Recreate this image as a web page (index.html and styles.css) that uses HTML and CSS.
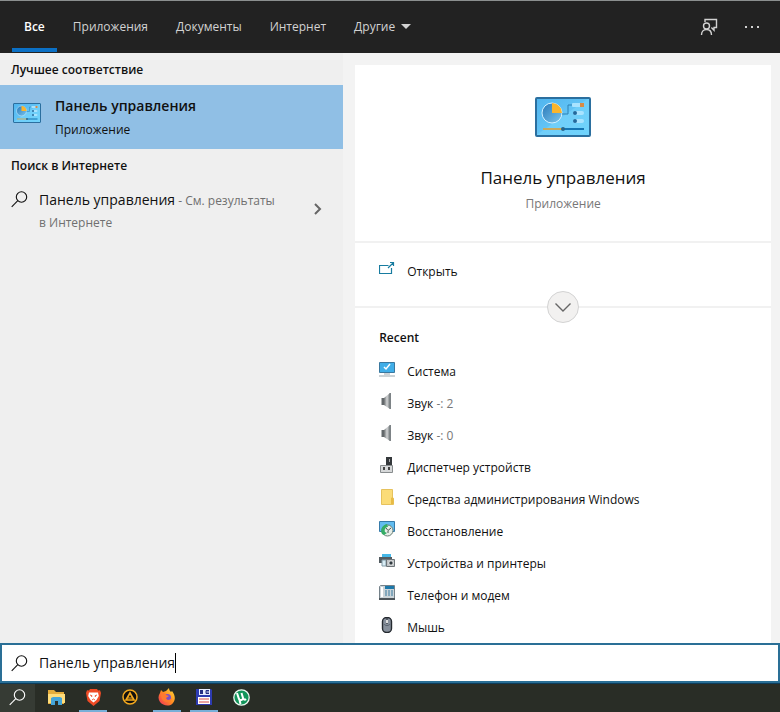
FILE: index.html
```html
<!DOCTYPE html>
<html lang="ru">
<head>
<meta charset="utf-8">
<meta name="viewport" content="width=device-width, initial-scale=1">
<title>Поиск</title>
<link rel="stylesheet" href="styles.css">
</head>
<body>
<svg class="defs" aria-hidden="true">
  <defs>
    <linearGradient id="panel-blue" x1="0" y1="0" x2="1" y2="1">
      <stop offset="0" stop-color="#4fb4ee"/><stop offset=".48" stop-color="#62c3f5"/><stop offset=".5" stop-color="#70cef9"/><stop offset="1" stop-color="#6fd3fc"/>
    </linearGradient>
    <linearGradient id="pie-blue" x1="0" y1="0" x2="1" y2="1">
      <stop offset="0" stop-color="#2878b8"/><stop offset="1" stop-color="#7cc6ee"/>
    </linearGradient>
    <linearGradient id="metal" x1="0" x2="1">
      <stop offset="0" stop-color="#6a6e70"/><stop offset=".5" stop-color="#d4d6d7"/><stop offset="1" stop-color="#73787b"/>
    </linearGradient>
    <linearGradient id="fire" x1="1" y1="0" x2="0" y2="1">
      <stop offset="0" stop-color="#ffe13b"/><stop offset=".5" stop-color="#ff8a20"/><stop offset="1" stop-color="#f22b62"/>
    </linearGradient>
    <symbol id="control-panel" viewBox="0 0 56 40">
      <rect x="1" y="1" width="54" height="38" rx="1" fill="url(#panel-blue)" stroke="#2b6f9f" stroke-width="2"/>
      <circle cx="17" cy="16" r="10" fill="url(#pie-blue)" stroke="#d4f1ff"/>
      <path d="M17 16V6a10 10 0 0 1 10 10z" fill="#fbb52c"/>
      <path d="M27 17h6V8h4" fill="none" stroke="#2d81b5"/>
      <rect x="37" y="6" width="12" height="4" rx="1" fill="#a9e3ff"/><rect x="45" y="6" width="4" height="4" fill="#d98b45"/>
      <rect x="38" y="14" width="11" height="4" rx="2" fill="#a9e3ff"/><circle cx="40" cy="16" r="2" fill="#22689c"/>
      <rect x="38" y="22" width="11" height="4" rx="2" fill="#a9e3ff"/><circle cx="40" cy="24" r="2" fill="#22689c"/>
      <path d="M8 32h20" stroke="#c9a95d" stroke-width="2"/><path d="M29 32h20" stroke="#1475b3" stroke-width="2"/><circle cx="28" cy="32" r="2" fill="#27658c"/>
    </symbol>
    <symbol id="magnifier" viewBox="0 0 17 17">
      <circle cx="10.5" cy="6" r="5.2" fill="none" stroke="currentColor" stroke-width="1.1"/>
      <path d="M6.8 9.7 .7 15.8" stroke="currentColor" stroke-width="1.1"/>
    </symbol>
    <symbol id="speaker" viewBox="0 0 16 16">
      <path d="M2.500 5H6v7H2.500z" fill="#63686b"/><path d="m5 5 6-5v16l-6-4z" fill="url(#metal)"/><path d="M10.500 0H12v16h-1.500z" fill="#7d8386"/>
    </symbol>
  </defs>
</svg>

<header class="topbar">
  <nav class="tabs" aria-label="Категории поиска">
    <button class="tab active">Все</button>
    <button class="tab">Приложения</button>
    <button class="tab">Документы</button>
    <button class="tab">Интернет</button>
    <button class="tab">Другие <svg class="caret-down" viewBox="0 0 10 5" aria-hidden="true"><path d="M0 0h10L5 5z" fill="currentColor"/></svg></button>
  </nav>
  <div class="actions">
    <button class="action" aria-label="Отзыв">
      <svg width="18" height="18" viewBox="0 0 18 18" fill="none" stroke="currentColor" stroke-width="1.4"><path d="M5 4V1.5h11.5v8H14v2.8l-2.6-2.7"/><circle cx="6.5" cy="8" r="3"/><path d="M1.5 17c0-3.7 2-5.5 5-5.5s5 1.800 5 5.500"/></svg>
    </button>
    <button class="action" aria-label="Параметры">
      <svg width="16" height="18" viewBox="0 0 16 18" fill="currentColor"><path d="M1 8h2v2H1zM7 8h2v2H7zM13 8h2v2h-2z"/></svg>
    </button>
  </div>
</header>

<main class="content">
  <section class="results">
    <h2 class="group">Лучшее соответствие</h2>
    <a class="best" href="#panel">
      <svg class="best-icon" aria-hidden="true"><use href="#control-panel"/></svg>
      <span class="best-text"><strong class="best-title">Панель управления</strong><span class="best-kind">Приложение</span></span>
    </a>
    <h2 class="group">Поиск в Интернете</h2>
    <a class="web" href="#web">
      <svg class="lens" aria-hidden="true"><use href="#magnifier"/></svg>
      <span class="web-text"><span class="web-query">Панель управления</span> - См. результаты в Интернете</span>
      <svg class="chevron" viewBox="0 0 8 12" aria-hidden="true"><path d="m1 1 5 5-5 5" fill="none" stroke="currentColor" stroke-width="2"/></svg>
    </a>
  </section>

  <section class="preview" id="panel">
    <div class="card">
      <div class="hero">
        <svg class="hero-icon" aria-hidden="true"><use href="#control-panel"/></svg>
        <h1 class="hero-title">Панель управления</h1>
        <p class="hero-kind">Приложение</p>
      </div>
      <div class="open">
        <a class="row" href="#open">
          <svg class="icon" viewBox="0 0 16 16" fill="none" stroke="#187ca0" stroke-width="1.200" aria-hidden="true"><path d="M9.500 4.500h-9v8h12V7M9 7l5.500-5.500M11 1.500h3.500V5"/></svg>
          <span>Открыть</span>
        </a>
        <button class="expand" aria-label="Развернуть"><svg width="16" height="9" viewBox="0 0 16 9"><path d="m0.500 .500 7.500 7.500 7.500-7.500" fill="none" stroke="#666" stroke-width="1.400"/></svg></button>
      </div>
      <div class="recent">
        <h2 class="recent-title">Recent</h2>
        <ul class="list">
          <li><a class="row" href="#system"><svg class="icon" viewBox="0 0 16 16" aria-hidden="true"><path d="M.5 1.500h15v10H.500z" fill="#40aee8" stroke="#3a789f"/><path d="m5 6 2 2 4-5" fill="none" stroke="#fff" stroke-width="1.500"/><path d="M5 13h6M0 15h16" stroke="#9aa7ae"/></svg><span>Система</span></a></li>
          <li><a class="row" href="#sound2"><svg class="icon" aria-hidden="true"><use href="#speaker"/></svg><span>Звук <span class="muted">-: 2</span></span></a></li>
          <li><a class="row" href="#sound0"><svg class="icon" aria-hidden="true"><use href="#speaker"/></svg><span>Звук <span class="muted">-: 0</span></span></a></li>
          <li><a class="row" href="#devices"><svg class="icon" viewBox="0 0 16 16" aria-hidden="true"><path d="M7 0h6v8H7z" fill="#34383b"/><path d="M10 2h1v3h-1z" fill="#aaa"/><path d="M1.500 8.500h12v7h-12z" fill="#d6d8d9" stroke="#888c8e"/><path d="M4 10h2v3H4zM9 10h2v3H9z" fill="#444"/></svg><span>Диспетчер устройств</span></a></li>
          <li><a class="row" href="#admin"><svg class="icon" viewBox="0 0 16 16" aria-hidden="true"><path d="M2.500.500h11v8l1 1v6h-12z" fill="#fbdc78" stroke="#e6c25d"/><path d="m12 9 1.500-1 1 1v6H12z" fill="#e8bb46"/></svg><span>Средства администрирования Windows</span></a></li>
          <li><a class="row" href="#recovery"><svg class="icon" viewBox="0 0 16 16" aria-hidden="true"><path d="M.500.500h15v10H.500z" fill="#62bdf0" stroke="#367baa"/><circle cx="8.500" cy="9.500" r="5.500" fill="#e6eee8" stroke="#687b73"/><path d="M8 3C3 4 1 9 3 13l2 1 3-2-2-1c-1-3 1-5 3-5z" fill="#35ad66"/><path d="m7 7 2 2.500L12 7M9 10v2" fill="none" stroke="#4c5652"/></svg><span>Восстановление</span></a></li>
          <li><a class="row" href="#printers"><svg class="icon" viewBox="0 0 16 16" aria-hidden="true"><path d="M0 4h13v6H0z" fill="#535c61"/><path d="M3 1h9v3H3z" fill="#45b8e8"/><path d="M3 7h4v6H3z" fill="#d9edf5" stroke="#829aa6"/><path d="M7.500 6.500h8v7h-8z" fill="#bfc3c5" stroke="#6d7478"/><circle cx="12" cy="10" r="2.200" fill="#303a40" stroke="#eee"/></svg><span>Устройства и принтеры</span></a></li>
          <li><a class="row" href="#phone"><svg class="icon" viewBox="0 0 16 16" aria-hidden="true"><path d="M1.500.500h14v13H.500v-12z" fill="#cbd4d9" stroke="#75828a"/><path d="M6 1h9v3H6z" fill="#1c78aa"/><path d="M3 2v10" stroke="#fff" stroke-width="2"/><path d="M6 6h2M9 6h2M12 6h2M6 8h2M9 8h2M12 8h2M6 10h2M9 10h2M12 10h2" stroke="#397b9f"/><path d="M0 13h16v2H0z" fill="#4c545a"/></svg><span>Телефон и модем</span></a></li>
          <li><a class="row" href="#mouse"><svg class="icon" viewBox="0 0 16 16" aria-hidden="true"><rect x="3.500" y=".500" width="9" height="15" rx="4" fill="#87909c" stroke="#252a30" stroke-width="1.400"/><path d="M8 1v6" stroke="#252a30"/><path d="M8 3v3" stroke="#ddd" stroke-width="2"/><path d="M5 7c1 2 5 2 6 0" fill="none" stroke="#57616d"/></svg><span>Мышь</span></a></li>
        </ul>
      </div>
    </div>
  </section>
</main>

<label class="search">
  <svg class="lens" aria-hidden="true"><use href="#magnifier"/></svg>
  <input class="search-input" type="text" value="Панель управления" aria-label="Поиск">
  <span class="text-caret"></span>
</label>

<footer class="taskbar">
  <button class="task current" aria-label="Поиск"><svg width="17" height="17"><use href="#magnifier"/></svg></button>
  <button class="task" aria-label="Проводник"><svg width="17" height="16" viewBox="0 0 17 16"><path d="M0 1h6l2 2h8v12H0z" fill="#e5ad3c"/><path d="M0 5h17v9H0z" fill="#ffdc7a"/><path d="M3 16V9l2-1h7l2 1v7h-4v-4H7v4z" fill="#45a4d8"/><path d="M7 12h3v4H7z" fill="#292d26"/></svg></button>
  <button class="task running" aria-label="Brave"><svg width="15" height="17" viewBox="0 0 15 17"><path d="M4 0h7l1 1.500 2-.300L15 4l-1.500 8L7.500 17l-6-5L0 4l1-2.800 2 .300z" fill="#ef4b26"/><path d="M3 3.500h9l.800 3.500-2.300 4-3 2.500-3-2.500L2.200 7z" fill="#fff"/><path d="m4 6 2 .800-.500 1.200M11 6l-2 .800.500 1.200M6 11l1.500-1L9 11" fill="none" stroke="#ef4b26" stroke-width=".900"/></svg></button>
  <button class="task" aria-label="AIMP"><svg width="16" height="16" viewBox="0 0 16 16"><circle cx="8" cy="8" r="7" fill="#11100e" stroke="#f4a91e" stroke-width="1.500"/><path d="m8 4 4 7H4z" fill="none" stroke="#f4a91e" stroke-width="1.700"/><path d="M6 9h4" stroke="#f4a91e"/></svg></button>
  <button class="task running" aria-label="Firefox"><svg width="18" height="18" viewBox="0 0 18 18"><path d="M2 5 3 2l2 2 3-1 3-3c0 2 1 3 2 4l1-1c3 4 4 8 1 12-3 4-10 3-13-1C0 11 0 8 2 5z" fill="url(#fire)"/><circle cx="9.500" cy="9.500" r="3.500" fill="#7950c8"/><path d="M3 5c3-1 4 0 5 2l3 1-3 2c1 3 4 2 6 0-1 5-8 5-10 1-1-2-1-4-1-6z" fill="#ff7a30"/></svg></button>
  <button class="task running" aria-label="Total Commander"><svg width="16" height="16" viewBox="0 0 16 16"><path d="M0 0h15l1 1v15H0z" fill="#2d3bb0"/><path d="M3 0h11v6H3z" fill="#e8edff"/><path d="M4 1h3v4H4z" fill="#252f83"/><path d="M13 1.500h-3v3h3M10 3h3" fill="none" stroke="#252f83"/><path d="M2 8h12v7H2z" fill="#fff"/><path d="M3 10h10M3 13h10" stroke="#d64b45"/></svg></button>
  <button class="task" aria-label="µTorrent"><svg width="17" height="17" viewBox="0 0 17 17"><circle cx="8.500" cy="8.500" r="7.700" fill="#12945a" stroke="#edf7f1" stroke-width="1.300"/><path d="m4 4 2 6c1 2 4 1 4-1L8.500 4M10 9c1 2 2 2 3 1M6.500 11l1 4" fill="none" stroke="#fff" stroke-width="2"/></svg></button>
</footer>
</body>
</html>
```
FILE: styles.css
```css
* { box-sizing: border-box; }

body {
  margin: 0;
  min-height: 100vh;
  display: flex;
  flex-direction: column;
  font: 12px/20px "Open Sans", "Noto Sans", sans-serif;
  color: #111;
  background: #f3f3f3;
}

h1, h2, p, ul { margin: 0; padding: 0; }
ul { list-style: none; }
a { color: inherit; text-decoration: none; }
button { font: inherit; color: inherit; background: none; border: 0; padding: 0; }
svg { display: block; flex: none; }
.defs { position: absolute; width: 0; height: 0; }

.topbar {
  display: flex;
  justify-content: space-between;
  height: 53px;
  padding: 0 12px 1px;
  color: #d2d2d2;
  background: #222;
  border-top: 1px solid #8b8f8f;
}
.tabs { display: flex; gap: 4px; }
.tab {
  display: flex;
  align-items: center;
  gap: 6px;
  padding: 0 12px;
  border-top: 4px solid transparent;
  border-bottom: 4px solid transparent;
}
.tab.active { color: #fff; font-weight: 600; border-bottom-color: #0b70c5; }
.caret-down { width: 10px; height: 5px; }
.actions { display: flex; gap: 26px; padding: 0 8px; }

.content { flex: 1; display: flex; }
.results { flex: 0 0 44%; background: #efefef; }
.group { padding: 7px 11px 5px; font-size: 12px; line-height: 20px; font-weight: 600; }
.best {
  display: flex;
  align-items: flex-start;
  gap: 14px;
  height: 64px;
  padding: 9px 13px;
  background: #90bfe5;
}
.best-icon { width: 28px; height: 20px; margin-top: 9px; }
.best-text { display: flex; flex-direction: column; gap: 2px; }
.best-title { font-size: 14px; line-height: 24px; font-weight: 600; }
.web { display: flex; padding: 8px 21px 8px 11px; }
.lens { width: 17px; height: 17px; }
.web .lens { margin-top: 2px; }
.web-text { flex: 1; margin: 0 36px 0 11px; line-height: 22px; color: #707070; }
.web-query { font-size: 14px; color: #111; }
.chevron { width: 8px; height: 12px; margin-top: 14px; color: #666; }

.preview { flex: 1; padding: 12px 9px 0 12px; }
.card { background: #fff; }
.hero {
  display: flex;
  flex-direction: column;
  align-items: center;
  height: 178px;
  padding-top: 32px;
  border-bottom: 2px solid #f1f1f1;
}
.hero-icon { width: 56px; height: 40px; }
.hero-title { margin-top: 29px; font-size: 17px; line-height: 24px; font-weight: 400; }
.hero-kind { margin-top: 4px; color: #777; }
.open { position: relative; height: 65px; padding-top: 12px; border-bottom: 2px solid #f1f1f1; }
.row { display: flex; align-items: center; gap: 12px; height: 32px; padding: 2px 24px 0; }
.icon { width: 16px; height: 16px; margin-bottom: 6px; }
.expand {
  position: absolute;
  left: 50%;
  bottom: -17px;
  width: 32px;
  height: 32px;
  margin-left: -16px;
  display: grid;
  place-items: center;
  background: #f2f1f0;
  border: 1px solid #d3d3d3;
  border-radius: 50%;
}
.recent-title { padding: 20px 24px 7px; font-size: 12px; line-height: 20px; font-weight: 600; }
.muted { color: #777; }

.search {
  display: flex;
  align-items: center;
  height: 40px;
  padding: 0 11px 0 9px;
  background: #fff;
  border: 2px solid #2a6f96;
}
.search-input {
  field-sizing: content;
  margin-left: 11px;
  padding: 0;
  border: 0;
  outline: 0;
  font: 14px/20px "Open Sans", "Noto Sans", sans-serif;
  color: #111;
  background: none;
}
.text-caret { width: 1px; height: 20px; background: #000; }

.taskbar {
  display: flex;
  gap: 9px;
  height: 29px;
  background: #292d26;
  border-top: 1px solid #0d3c5a;
}
.task {
  display: grid;
  place-items: center;
  width: 28px;
  border-bottom: 2px solid transparent;
}
.task.current { width: 35px; margin-right: -2px; color: #fff; background: #363b34; }
.task.running { border-bottom-color: #78afd8; }
```
